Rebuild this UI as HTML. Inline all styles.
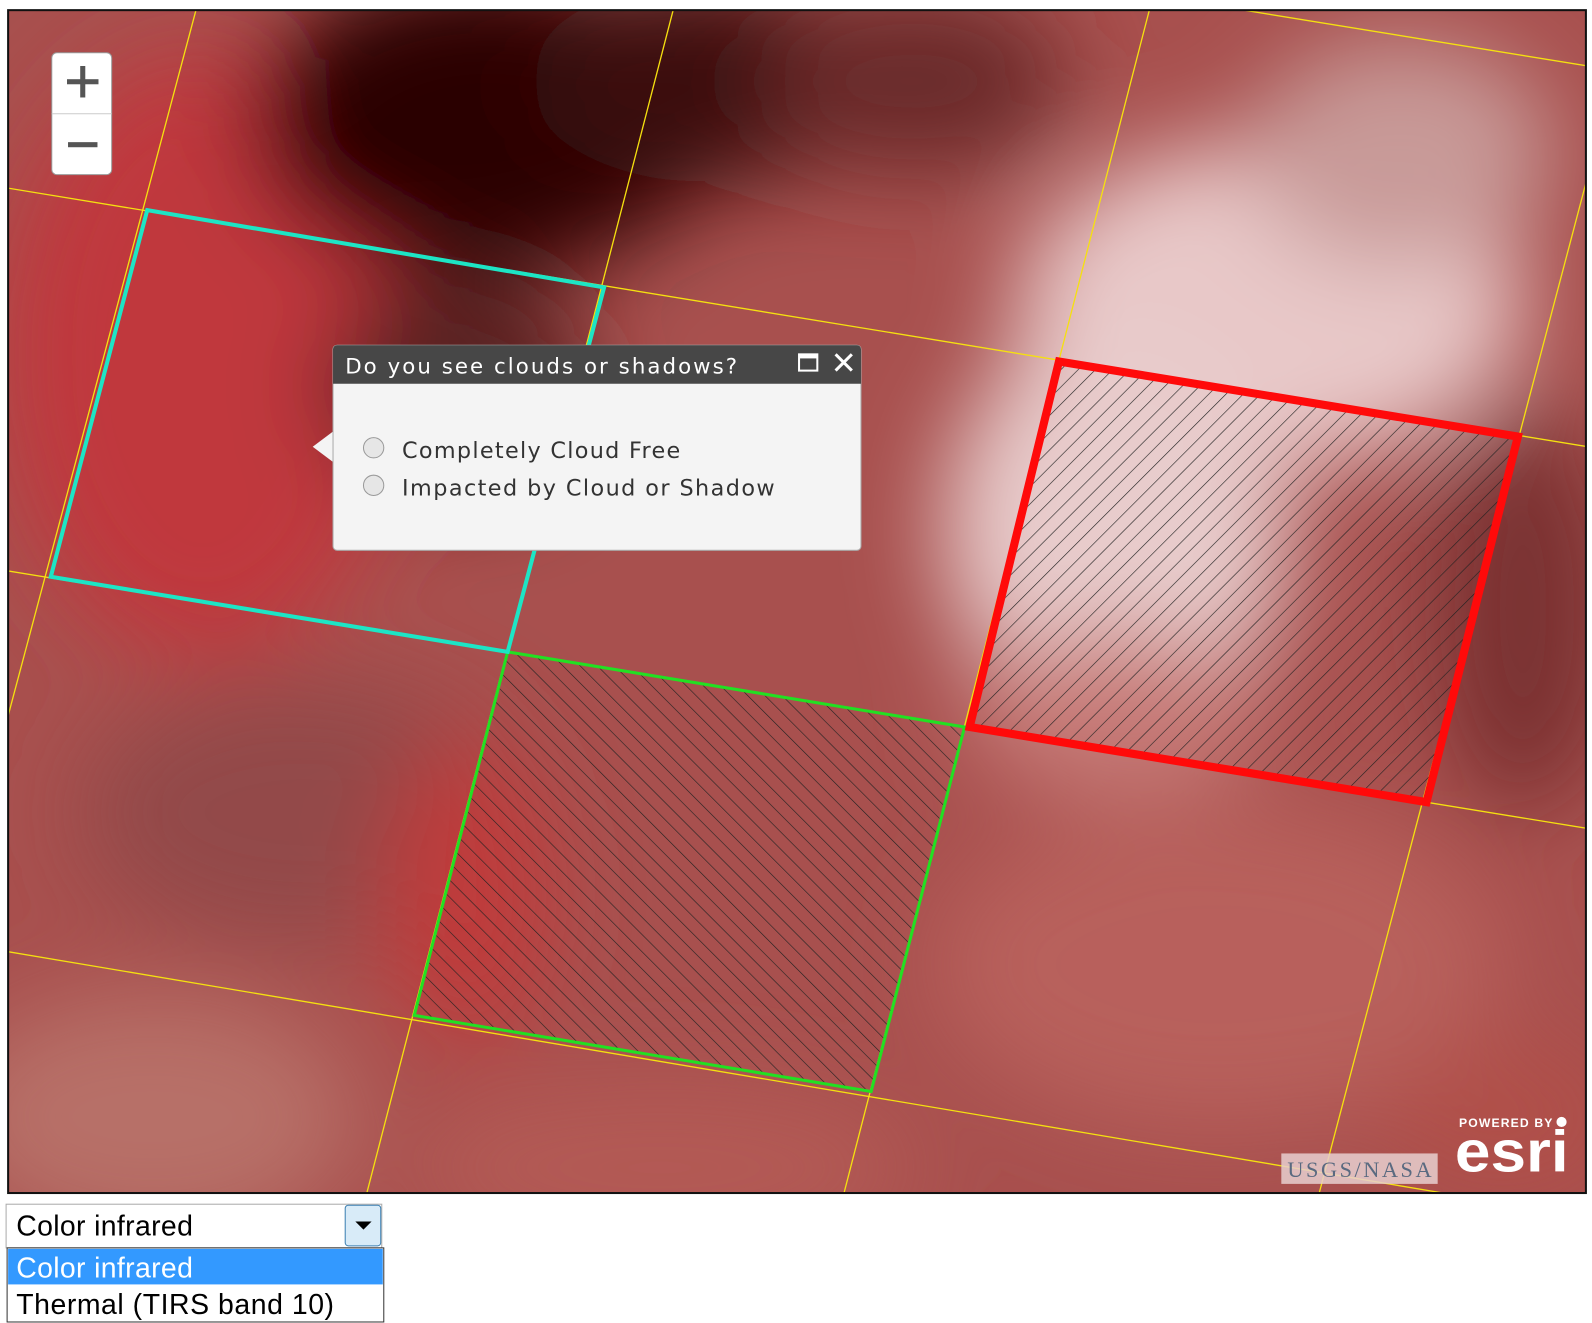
<!DOCTYPE html>
<html><head><meta charset="utf-8"><style>
html,body{margin:0;padding:0;background:#fff;width:1592px;height:1323px;overflow:hidden}
svg{display:block}
</style></head><body>
<svg width="1592" height="1323" viewBox="0 0 1568 1303" preserveAspectRatio="none" xmlns="http://www.w3.org/2000/svg">
<defs>
<filter id="b" x="-50%" y="-50%" width="200%" height="200%"><feGaussianBlur stdDeviation="45"/></filter>
<pattern id="hb" width="12" height="12" patternUnits="userSpaceOnUse" patternTransform="rotate(-45)"><line x1="0" y1="0" x2="0" y2="12" stroke="#222" stroke-width="1.2"/></pattern>
<pattern id="hf" width="12" height="12" patternUnits="userSpaceOnUse" patternTransform="rotate(45)"><line x1="0" y1="0" x2="0" y2="12" stroke="#222" stroke-width="1.2"/></pattern>
<clipPath id="mc"><rect x="8" y="10" width="1554" height="1165"/></clipPath>
</defs>
<g clip-path="url(#mc)">
<rect x="8" y="10" width="1554" height="1165" fill="#a8504e"/>
<g filter="url(#b)">
<ellipse cx="200" cy="350" rx="200" ry="300" fill="#c0393e"/>
<ellipse cx="480" cy="120" rx="230" ry="150" fill="#2a0404"/>
<ellipse cx="700" cy="80" rx="180" ry="100" fill="#3a0a0a"/>
<ellipse cx="900" cy="80" rx="150" ry="90" fill="#6a2a2a"/>
<ellipse cx="450" cy="380" rx="130" ry="110" fill="#5a2020"/>
<ellipse cx="1250" cy="300" rx="250" ry="160" fill="#e8c8c8"/>
<ellipse cx="1100" cy="520" rx="170" ry="200" fill="#e8cccc"/>
<ellipse cx="1380" cy="150" rx="150" ry="110" fill="#c89a98"/>
<ellipse cx="1500" cy="600" rx="90" ry="200" fill="#7a3030"/>
<ellipse cx="300" cy="800" rx="220" ry="130" fill="#93484a"/>
<ellipse cx="150" cy="1100" rx="200" ry="120" fill="#b77068"/>
<ellipse cx="650" cy="1150" rx="250" ry="80" fill="#b35a55"/>
<ellipse cx="1200" cy="950" rx="280" ry="160" fill="#b8605c"/>
<ellipse cx="1100" cy="700" rx="150" ry="80" fill="#c77c78"/>
<ellipse cx="460" cy="880" rx="80" ry="150" fill="#c03a3a"/>
<ellipse cx="1480" cy="1100" rx="120" ry="80" fill="#b05048"/>
</g>
<g stroke="#f5e010" stroke-width="1.3" fill="none">
<line x1="0" y1="184" x2="1570" y2="441"/>
<line x1="0" y1="561" x2="1570" y2="817"/>
<line x1="0" y1="936" x2="1570" y2="1200"/>
<line x1="1225" y1="10" x2="1570" y2="66"/>
<line x1="193" y1="10" x2="0" y2="735"/>
<line x1="663" y1="10" x2="360" y2="1180"/>
<line x1="1132" y1="10" x2="830" y2="1180"/>
<line x1="1570" y1="150" x2="1298" y2="1180"/>
</g>
<polygon points="500,642 950,716 858,1075 408,1000" fill="url(#hb)" stroke="#22e022" stroke-width="3"/>
<polygon points="1043,356 1495,430 1405,790 955,716" fill="url(#hf)" stroke="#ff0a0a" stroke-width="8"/>
<polygon points="145,207 595,283 500,642 50,568" fill="none" stroke="#1de5c5" stroke-width="4"/>
<rect x="1262" y="1136" width="154" height="30" fill="#e7cfcf" opacity="0.85"/>
<text x="1268" y="1159" textLength="142" font-family="Liberation Serif,serif" font-size="22" fill="#5a6a80">USGS/NASA</text>
<text x="1437" y="1110" textLength="92" font-family="Liberation Sans,sans-serif" font-weight="bold" font-size="12" fill="#fff">POWERED BY</text>
<circle cx="1538" cy="1105" r="5" fill="#fff"/>
<text x="1433" y="1154" textLength="112" lengthAdjust="spacingAndGlyphs" font-family="Liberation Sans,sans-serif" font-weight="bold" font-size="58" fill="#fff">esri</text>
<rect x="51" y="52" width="59" height="120" rx="5" fill="#fff" stroke="#999"/>
<line x1="51" y1="112" x2="110" y2="112" stroke="#ccc"/>
<rect x="66" y="78" width="31" height="5" fill="#555"/>
<rect x="79" y="65" width="5" height="31" fill="#555"/>
<rect x="67" y="140" width="29" height="5" fill="#555"/>
<polygon points="328,425 308,440 328,455" fill="#f4f4f4"/>
<rect x="328" y="340" width="520" height="202" rx="4" fill="#f4f4f4" stroke="#aaa"/>
<path d="M328,378 V344 a4,4 0 0 1 4,-4 H844 a4,4 0 0 1 4,4 V378 Z" fill="#474747"/>
<text x="340" y="368" textLength="386" font-family="DejaVu Sans,sans-serif" font-size="21" fill="#fff">Do you see clouds or shadows?</text>
<rect x="787" y="349" width="18" height="16" fill="none" stroke="#fff" stroke-width="2"/>
<rect x="787" y="349" width="18" height="4" fill="#fff"/>
<path d="M823,349 L839,365 M839,349 L823,365" stroke="#fff" stroke-width="3"/>
<circle cx="368" cy="441" r="10" fill="#e6e6e6" stroke="#999"/>
<circle cx="368" cy="478" r="10" fill="#e6e6e6" stroke="#999"/>
<text x="396" y="451" textLength="274" font-family="DejaVu Sans,sans-serif" font-size="22" fill="#333">Completely Cloud Free</text>
<text x="396" y="488" textLength="367" font-family="DejaVu Sans,sans-serif" font-size="22" fill="#333">Impacted by Cloud or Shadow</text>
</g>
<rect x="8" y="10" width="1554" height="1165" fill="none" stroke="#111" stroke-width="2"/>
<rect x="6" y="1186" width="370" height="43" fill="#fff" stroke="#aaa"/>
<text x="16" y="1217" textLength="174" font-family="Liberation Sans,sans-serif" font-size="28" fill="#000">Color infrared</text>
<rect x="340" y="1187" width="35" height="40" rx="3" fill="#d8ebf8" stroke="#3c7fb1"/>
<polygon points="350,1203 366,1203 358,1211" fill="#000"/>
<rect x="7" y="1229" width="371" height="73" fill="#fff" stroke="#333"/>
<rect x="8" y="1230" width="369" height="35" fill="#3399ff"/>
<text x="16" y="1258" textLength="174" font-family="Liberation Sans,sans-serif" font-size="28" fill="#fff">Color infrared</text>
<text x="16" y="1294" textLength="313" font-family="Liberation Sans,sans-serif" font-size="28" fill="#000">Thermal (TIRS band 10)</text>
</svg>
</body></html>
